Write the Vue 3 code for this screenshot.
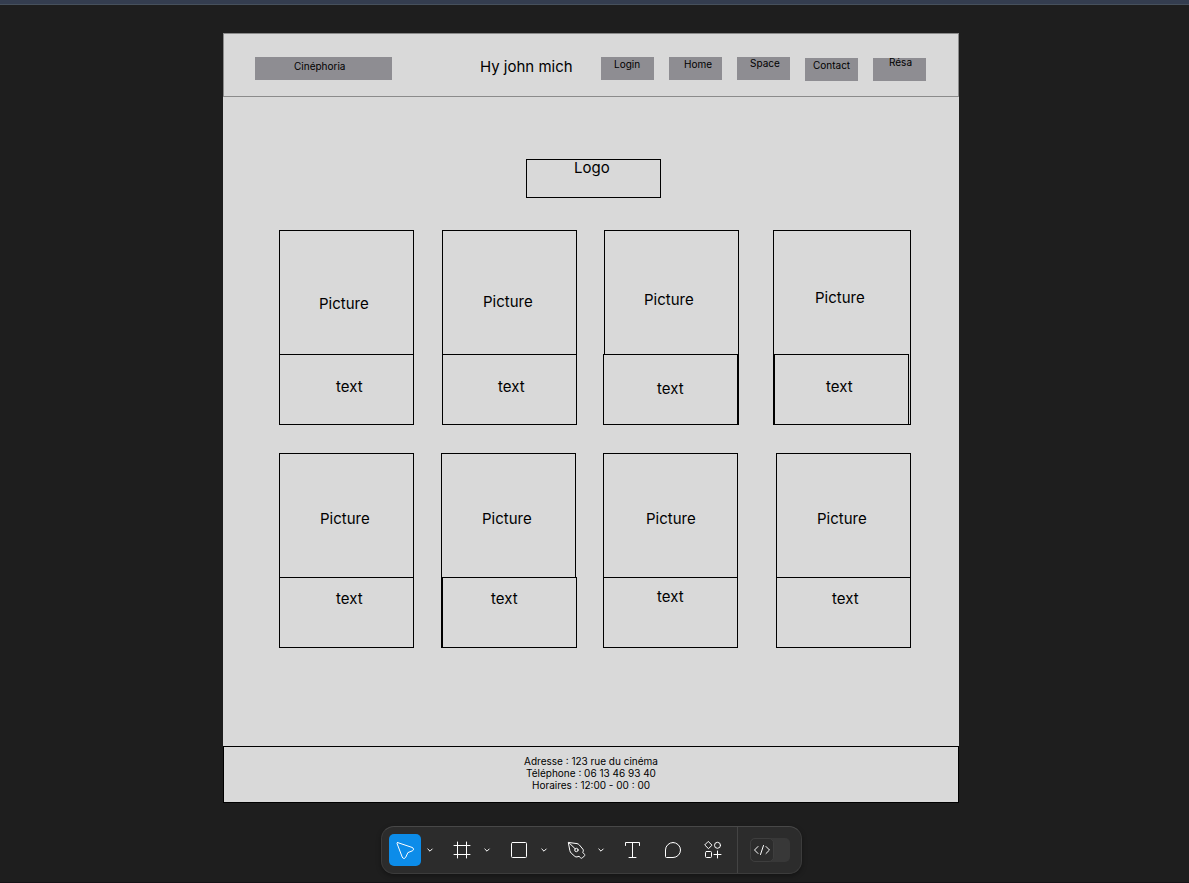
<script setup>
import { ref } from 'vue'

const tool = ref('move')
const devMode = ref(false)

// Objects of the artboard, in artboard coordinates. A label sits at its own x/y.
const navBoxes = [
  { x: 378, y: 24, w: 53, h: 23, text: 'Login', tx: 391, ty: 23 },
  { x: 446, y: 24, w: 53, h: 23, text: 'Home', tx: 461, ty: 23 },
  { x: 514, y: 24, w: 53, h: 23, text: 'Space', tx: 527, ty: 22 },
  { x: 582, y: 25, w: 53, h: 23, text: 'Contact', tx: 590, ty: 24 },
  { x: 650, y: 25, w: 53, h: 23, text: 'Résa', tx: 666, ty: 21 },
]

const shapes = [
  { x: 303, y: 126, w: 135, h: 39 },
  { x: 56, y: 197, w: 135, h: 195 },
  { x: 56, y: 321, w: 135, h: 71 },
  { x: 219, y: 197, w: 135, h: 195 },
  { x: 219, y: 321, w: 135, h: 71 },
  { x: 381, y: 197, w: 135, h: 195 },
  { x: 380, y: 321, w: 135, h: 71 },
  { x: 550, y: 197, w: 138, h: 195 },
  { x: 551, y: 321, w: 135, h: 71 },
  { x: 56, y: 420, w: 135, h: 195 },
  { x: 56, y: 544, w: 135, h: 71 },
  { x: 218, y: 420, w: 135, h: 195 },
  { x: 219, y: 544, w: 135, h: 71 },
  { x: 380, y: 420, w: 135, h: 195 },
  { x: 380, y: 544, w: 135, h: 71 },
  { x: 553, y: 420, w: 135, h: 195 },
  { x: 553, y: 544, w: 135, h: 71 },
]

const labels = [
  { x: 257, y: 24, text: 'Hy john mich' },
  { x: 351, y: 125, text: 'Logo' },
  { x: 96, y: 261, text: 'Picture' },
  { x: 260, y: 259, text: 'Picture' },
  { x: 421, y: 257, text: 'Picture' },
  { x: 592, y: 255, text: 'Picture' },
  { x: 113, y: 344, text: 'text' },
  { x: 275, y: 344, text: 'text' },
  { x: 434, y: 346, text: 'text' },
  { x: 603, y: 344, text: 'text' },
  { x: 97, y: 476, text: 'Picture' },
  { x: 259, y: 476, text: 'Picture' },
  { x: 423, y: 476, text: 'Picture' },
  { x: 594, y: 476, text: 'Picture' },
  { x: 113, y: 556, text: 'text' },
  { x: 268, y: 556, text: 'text' },
  { x: 434, y: 554, text: 'text' },
  { x: 609, y: 556, text: 'text' },
]

const box = (o) => ({ left: o.x + 'px', top: o.y + 'px', width: o.w + 'px', height: o.h + 'px' })
const at = (x, y) => ({ left: x + 'px', top: y + 'px' })
</script>

<template>
  <div class="app">
    <div class="window-bar"></div>

    <main class="canvas">
      <article class="artboard">
        <header class="head"></header>
        <div class="body"></div>
        <footer class="foot">
          <p>Adresse : 123 rue du cinéma</p>
          <p>Téléphone : 06 13 46 93 40</p>
          <p>Horaires : 12:00 - 00 : 00</p>
        </footer>

        <a class="object fill" href="#" :style="box({ x: 32, y: 24, w: 137, h: 23 })">
          <span class="object small" :style="at(39, 1)">Cinéphoria</span>
        </a>
        <nav aria-label="Menu">
          <a v-for="n in navBoxes" :key="n.text" class="object fill" href="#" :style="box(n)">
            <span class="object small" :style="at(n.tx - n.x, n.ty - n.y)">{{ n.text }}</span>
          </a>
        </nav>
        <div v-for="(s, i) in shapes" :key="'s' + i" class="object outline" :style="box(s)"></div>
        <span v-for="(l, i) in labels" :key="'l' + i" class="object label" :style="at(l.x, l.y)">{{ l.text }}</span>
      </article>
    </main>

    <div class="toolbar" role="toolbar" aria-label="Tools">
      <div class="group">
        <button class="tool" :class="{ active: tool === 'move' }" aria-label="Move" @click="tool = 'move'">
          <svg viewBox="0 0 24 24"><path d="M4.7 4.6 L19 9.4 C21 10.1 21 12.2 19.2 12.9 L14.9 14.6 L12.7 19.3 C11.8 21 9.8 20.8 9.2 19 L4 5.4 C3.8 4.8 4.2 4.4 4.7 4.6Z" /></svg>
        </button>
        <button class="more" aria-label="Move tools"><svg viewBox="0 0 8 8"><path d="M1.8 3 L4 5.2 L6.2 3" /></svg></button>
      </div>
      <div class="group">
        <button class="tool" :class="{ active: tool === 'frame' }" aria-label="Frame" @click="tool = 'frame'">
          <svg viewBox="0 0 24 24"><path d="M7.5 4V20M16.5 4V20M4 7.5H20M4 16.5H20" /></svg>
        </button>
        <button class="more" aria-label="Region tools"><svg viewBox="0 0 8 8"><path d="M1.8 3 L4 5.2 L6.2 3" /></svg></button>
      </div>
      <div class="group">
        <button class="tool" :class="{ active: tool === 'shape' }" aria-label="Rectangle" @click="tool = 'shape'">
          <svg viewBox="0 0 24 24"><rect x="4.5" y="4.5" width="15" height="15" rx="1" /></svg>
        </button>
        <button class="more" aria-label="Shape tools"><svg viewBox="0 0 8 8"><path d="M1.8 3 L4 5.2 L6.2 3" /></svg></button>
      </div>
      <div class="group">
        <button class="tool" :class="{ active: tool === 'pen' }" aria-label="Pen" @click="tool = 'pen'">
          <svg viewBox="0 0 24 24">
            <path d="M4.7 4.5 L13 5.6 C13.9 5.8 14.7 6.2 15.3 6.9 L18.9 11.2 C19.4 11.8 19.5 12.5 19.2 13.2 L18.8 14.5 L20.4 16.2 C20.9 16.8 20.9 17.4 20.4 17.9 L18.4 19.9 C17.9 20.4 17.3 20.4 16.7 19.9 L15 18.3 L13 18.9 C12.3 19.1 11.5 18.9 10.9 18.4 L7.2 15.1 C6.6 14.5 6.1 13.8 5.9 12.9 Z" />
            <path d="M5 4.8 L11.2 10.8" /><circle cx="12.4" cy="12" r="1.7" />
          </svg>
        </button>
        <button class="more" aria-label="Drawing tools"><svg viewBox="0 0 8 8"><path d="M1.8 3 L4 5.2 L6.2 3" /></svg></button>
      </div>
      <button class="tool" :class="{ active: tool === 'text' }" aria-label="Text" @click="tool = 'text'">
        <svg viewBox="0 0 24 24"><path d="M4.5 7.5V4.5H18.5V7.5M11.5 4.5V19.5M8 19.5H15" /></svg>
      </button>
      <button class="tool" :class="{ active: tool === 'comment' }" aria-label="Comment" @click="tool = 'comment'">
        <svg viewBox="0 0 24 24"><path d="M12 4.5 A7.5 7.5 0 0 1 12 19.5 H5.5 Q4.5 19.5 4.5 18.5 V12 A7.5 7.5 0 0 1 12 4.5Z" /></svg>
      </button>
      <button class="tool" :class="{ active: tool === 'actions' }" aria-label="Actions" @click="tool = 'actions'">
        <svg viewBox="0 0 24 24">
          <path d="M7.5 3.7 L11 7.2 L7.5 10.7 L4 7.2Z M16.5 13V20M13 16.5H20" />
          <circle cx="16.5" cy="7.3" r="3" /><rect x="4.5" y="13.5" width="6" height="6" rx="1" />
        </svg>
      </button>
      <div class="divider"></div>
      <button class="switch" role="switch" :aria-checked="devMode" aria-label="Dev Mode" @click="devMode = !devMode">
        <span class="knob" :class="{ on: devMode }">
          <svg viewBox="0 0 18 12"><path d="M5 2.5 L1.5 6 L5 9.5 M13 2.5 L16.5 6 L13 9.5 M10.5 1.5 L7.5 10.5" /></svg>
        </span>
      </button>
    </div>
  </div>
</template>

<style>
body {
  background: #1e1e1e;
}
</style>

<style scoped>
.app {
  box-sizing: border-box;
  display: flex;
  flex-direction: column;
  min-height: 100vh;
  padding-bottom: 8px;
  border-bottom: 1px solid #151216;
  background: #1e1e1e;
  color: #000;
  font-family: Inter, "Liberation Sans", sans-serif;
}

.window-bar {
  height: 4px;
  background: #343d4f;
  border-bottom: 1px solid #46505c;
}

.canvas {
  flex: 1;
  display: flex;
  justify-content: center;
  align-items: flex-start;
  padding: 28px 7px 16px 0;
}

.artboard {
  position: relative;
  flex: none;
  width: 736px;
  background: #d9d9d9;
}

.head {
  box-sizing: border-box;
  height: 64px;
  border: 1px solid #8b8b8b;
}

.body {
  height: 649px;
}

.foot {
  border: 1px solid #000;
  padding: 8px 0 11px;
  font-size: 10px;
  line-height: 12px;
  text-align: center;
}

.foot p {
  margin: 0;
}

.object {
  position: absolute;
  box-sizing: border-box;
  white-space: nowrap;
}

.fill {
  background: #8e8d92;
  color: #000;
  text-decoration: none;
}

.outline {
  border: 1px solid #000;
  background: #d9d9d9;
}

.small {
  font-size: 10px;
  line-height: 16px;
}

.label {
  font-size: 15px;
  line-height: 20px;
}

.toolbar {
  box-sizing: border-box;
  align-self: center;
  display: flex;
  align-items: center;
  gap: 8px;
  height: 48px;
  margin-right: 6px;
  padding: 0 11px 0 7px;
  background: #2c2c2c;
  border: 1px solid #3c3c3c;
  border-top-color: #484848;
  border-radius: 13px;
  box-shadow: 0 2px 5px rgba(0, 0, 0, 0.35);
}

.group {
  display: flex;
}

button {
  display: flex;
  align-items: center;
  justify-content: center;
  margin: 0;
  padding: 0;
  border: 0;
  background: none;
  color: #fff;
}

.tool {
  width: 32px;
  height: 32px;
  border-radius: 5px;
}

.tool.active {
  background: #0c8ce9;
}

.more {
  width: 17px;
  height: 32px;
}

svg {
  fill: none;
  stroke: currentColor;
  stroke-width: 1;
  stroke-linecap: round;
  stroke-linejoin: round;
}

.tool svg {
  width: 24px;
  height: 24px;
}

.more svg {
  width: 8px;
  height: 8px;
}

.divider {
  width: 1px;
  height: 46px;
  background: #444;
}

.switch {
  justify-content: flex-start;
  width: 40px;
  height: 24px;
  margin-left: 4px;
  border-radius: 5px;
  background: #383838;
}

.knob {
  box-sizing: border-box;
  display: flex;
  align-items: center;
  justify-content: center;
  width: 24px;
  height: 24px;
  border: 1px solid #3e3e3e;
  border-radius: 5px;
  background: #2c2c2c;
}

.knob.on {
  margin-left: auto;
}

.knob svg {
  width: 18px;
  height: 12px;
}
</style>
